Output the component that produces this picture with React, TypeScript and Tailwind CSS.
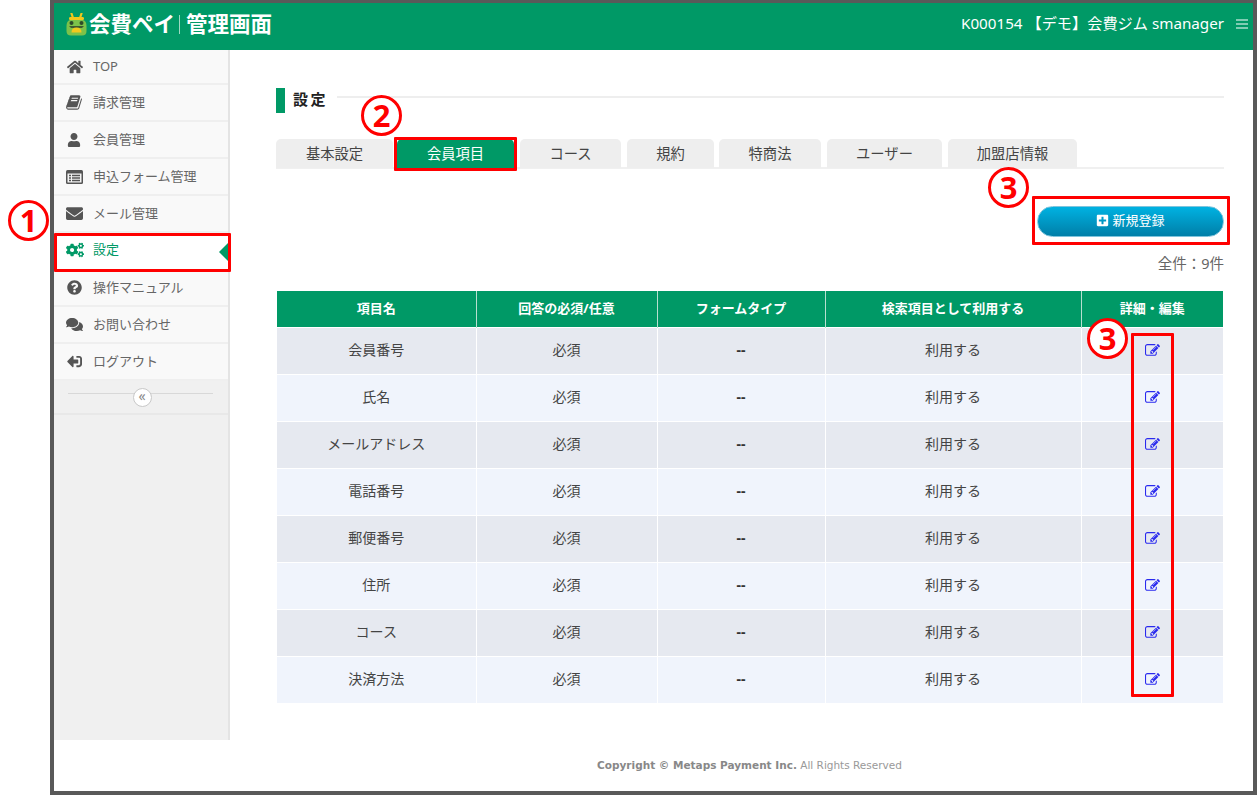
import React from "react";
import { FaHome, FaUser, FaEnvelope, FaCogs, FaQuestionCircle, FaComments, FaSignOutAlt, FaPlusSquare } from "react-icons/fa";

const font = { fontFamily: '"Noto Sans", "Noto Sans CJK JP", sans-serif' };

function BookIcon() {
  return (
    <svg width="16" height="17" viewBox="0 0 1664 1792" fill="currentColor">
      <path d="M1639 478q40 57 18 129l-275 906q-19 64-76.500 107.500t-122.500 43.500h-923q-77 0-148.500-53.500t-99.500-131.500q-24-67-2-127 0-4 3-27t4-37q1-8-3-21.500t-3-19.500q2-11 8-21t16.500-23.500 16.500-23.500q23-38 45-91.500t30-91.500q3-10 .5-30t-.5-28q3-11 17-28t17-23q21-36 42-92t25-90q1-9-2.500-32t.5-28q4-13 22-30.500t22-22.500q19-26 42.500-84.500t27.500-96.500q1-8-3-25.500t-2-26.500q2-8 9-18t18-23 17-21q8-12 16.500-30.500t15-35 16-36 19.500-32 26.500-23.500 36-11.500 47.500 5.500l-1 3q38-9 51-9h761q74 0 114 56t18 130l-274 906q-36 119-71.500 153.500t-128.500 34.500h-869q-27 0-38 15-11 16-1 43 24 70 144 70h923q29 0 56-15.500t35-41.500l300-987q7-22 5-57 38 15 59 43zm-1064 2q-4 13 2 22.500t20 9.500h608q13 0 25.500-9.500t16.500-22.500l21-64q4-13-2-22.500t-20-9.500h-608q-13 0-25.500 9.500t-16.500 22.500zm-83 256q-4 13 2 22.500t20 9.500h608q13 0 25.500-9.500t16.500-22.500l21-64q4-13-2-22.500t-20-9.500h-608q-13 0-25.500 9.500t-16.500 22.500z" />
    </svg>
  );
}

function ListIcon() {
  return (
    <svg width="17" height="14" viewBox="0 0 17 14">
      <rect x="0" y="0" width="17" height="14" rx="1.5" fill="#555" />
      <rect x="1.5" y="3.5" width="14" height="9" fill="#f4f4f4" />
      <path d="M3 5.5 H5 M3 8 H5 M3 10.500 H5 M6 5.500 H14 M6 8 H14 M6 10.500 H14" stroke="#555" strokeWidth="1.300" />
    </svg>
  );
}

function EditIcon() {
  return (
    <svg width="15" height="15" viewBox="0 0 1792 1792" fill="#2a2aee" className="mx-auto">
      <path d="M888 1184l116-116-152-152-116 116v56h96v96h56zm440-720q-16-16-33 1l-350 350q-17 17-1 33t33-1l350-350q17-17 1-33zm80 594v190q0 119-84.500 203.500t-203.500 84.500h-832q-119 0-203.500-84.500t-84.500-203.500v-832q0-119 84.500-203.500t203.500-84.500h832q63 0 117 25 15 7 18 23 3 17-9 29l-49 49q-14 14-32 8-23-6-45-6h-832q-66 0-113 47t-47 113v832q0 66 47 113t113 47h832q66 0 113-47t47-113v-126q0-13 9-22l64-64q15-15 35-7t20 29zm-96-738l288 288-672 672h-288v-288zm444 132l-92 92-288-288 92-92q28-28 68-28t68 28l152 152q28 28 28 68t-28 68z" />
    </svg>
  );
}

const nav = [
  { icon: <BookIcon />, label: "請求管理" },
  { icon: <FaUser className="text-[14px]" />, label: "会員管理" },
  { icon: <ListIcon />, label: "申込フォーム管理" },
  { icon: <FaEnvelope className="text-[17px]" />, label: "メール管理" },
];
const nav2 = [
  { icon: <FaQuestionCircle className="text-[15px]" />, label: "操作マニュアル" },
  { icon: <FaComments className="text-[17px]" />, label: "お問い合わせ" },
  { icon: <FaSignOutAlt className="text-[15px] -scale-x-100" />, label: "ログアウト" },
];
const tabs = [
  { label: "基本設定", w: "w-[121px]", pr: "pr-[4px]" },
  { label: "会員項目", w: "w-[123px]", pr: "pr-[6px]", active: true },
  { label: "コース", w: "w-[107px]", pr: "pr-[6px]" },
  { label: "規約", w: "w-[92px]", pr: "pr-[5px]" },
  { label: "特商法", w: "w-[108px]", pr: "pr-[6px]" },
  { label: "ユーザー", w: "w-[121px]", pr: "pr-[6px]" },
  { label: "加盟店情報", w: "w-[129px]", pr: "pr-0" },
];
const rows = ["会員番号", "氏名", "メールアドレス", "電話番号", "郵便番号", "住所", "コース", "決済方法"];

function Logo() {
  return (
    <svg width="21" height="23" viewBox="0 0 21 23" className="shrink-0">
      <path d="M5.500 0.500 L7 5 M15.500 0.500 L14 5" stroke="#efc81c" strokeWidth="2.200" strokeLinecap="round" />
      <rect x="3" y="4" width="15" height="3.200" rx="1.400" fill="#efc81c" />
      <path d="M4 7 H17 Q20.500 8 20.500 13 V18 Q20.500 22.500 16 22.500 H5 Q0.500 22.500 0.500 18 V13 Q0.500 8 4 7 Z" fill="#7cc24a" />
      <circle cx="5.500" cy="10" r="2" fill="#2c4a2a" />
      <circle cx="15.500" cy="10" r="2" fill="#2c4a2a" />
      <path d="M3 13 H18 L16 15 H5 Z" fill="#3e5a30" />
      <path d="M5.500 19.500 Q5.500 14.500 10.500 14.500 Q15.500 14.500 15.500 19.500 Z" fill="#f2c81e" />
    </svg>
  );
}

function Num({ n, className }: { n: string; className: string }) {
  return (
    <div className={"absolute flex h-[41px] w-[41px] items-center justify-center rounded-full border-[3px] border-[#ff0000] bg-white text-[31px] font-bold leading-none text-[#ff0000] " + className}>
      {n}
    </div>
  );
}

function NavItem({ icon, label }: { icon: React.ReactNode; label: string }) {
  return (
    <div className="flex h-[37px] items-center border-b-2 border-[#efefef] bg-[#f9f9f9] text-[13px] text-[#666]">
      <span className="flex w-[39px] shrink-0 justify-center pl-[1px] text-[#555]">{icon}</span>
      <span>{label}</span>
    </div>
  );
}

export default function App() {
  return (
    <div className="relative h-[796px] w-[1257px] overflow-hidden bg-white pl-[50px]" style={font}>
      <div className="flex h-[795px] w-[1207px] flex-col border-[4px] border-t-[3px] border-[#595959] bg-white">
        <header className="flex h-[47px] shrink-0 items-center justify-between bg-[#009966] pb-[5px] text-white">
          <div className="flex items-center pl-[12px]">
            <Logo />
            <span className="ml-[2px] text-[21.500px] font-bold leading-none">会費ペイ</span>
            <span className="mx-[4px] h-[19px] w-[1px] bg-[#9fd8c2]" />
            <span className="ml-[2px] text-[21.500px] font-bold leading-none">管理画面</span>
          </div>
          <div className="flex items-center pr-[5px] text-[15.200px] leading-none">
            <span>K000154 【デモ】会費ジム smanager</span>
            <svg width="12" height="10" viewBox="0 0 12 10" className="ml-[12px]">
              <path d="M0 1 H12 M0 5 H12 M0 9 H12" stroke="#fff" strokeWidth="1.200" />
            </svg>
          </div>
        </header>

        <div className="flex h-[690px] shrink-0">
          <aside className="w-[176px] shrink-0 border-r-2 border-[#e4e4e4] bg-[#f0f0f0]">
            <div className="flex h-[35px] items-center border-b-2 border-[#efefef] bg-[#f9f9f9] text-[13px] text-[#666]">
              <span className="flex w-[39px] shrink-0 justify-center pl-[2px] text-[#555]"><FaHome className="text-[16px]" /></span>
              <span>TOP</span>
            </div>
            {nav.map((n) => <NavItem key={n.label} {...n} />)}
            <div className="relative flex h-[37px] items-center bg-white pb-[3px] text-[13px] text-[#009966]">
              <span className="flex w-[39px] shrink-0 justify-center pl-[2px]"><FaCogs className="text-[18px]" /></span>
              <span>設定</span>
              <span className="absolute right-0 top-[10px] h-0 w-0 border-y-[9px] border-r-[9px] border-y-transparent border-r-[#009966]" />
            </div>
            {nav2.map((n) => <NavItem key={n.label} {...n} />)}
            <div className="relative flex h-[34px] items-center justify-center border-b-2 border-[#e8e8e8] pl-[2px]">
              <div className="absolute left-[14px] right-[15px] top-[12px] h-[1px] bg-[#d8d8d8]" />
              <div className="relative flex h-[19px] w-[19px] items-center justify-center rounded-full border border-[#c8c8c8] bg-white pb-[2px] text-[14px] leading-none text-[#888]">«</div>
            </div>
          </aside>

          <main className="flex-1 pl-[46px] pr-[29px] pt-[38px]">
            <div className="flex h-[25px] items-center">
              <div className="h-[25px] w-[9px] bg-[#009966]" />
              <span className="mb-[2px] ml-[8px] text-[15px] font-bold leading-none tracking-[2.500px] text-[#222]">設定</span>
              <div className="mb-[7px] ml-[9px] h-[2px] flex-1 bg-[#eeeeee]" />
            </div>

            <div className="mt-[26px] flex h-[30px] border-b-2 border-[#f0f0f0]">
              {tabs.map((t) => (
                <div key={t.label} className={t.w + " " + t.pr + " shrink-0"}>
                  <div className={"flex h-[29px] items-center justify-center rounded-t-[5px] text-[14.300px] " + (t.active ? "bg-[#009966] text-white" : "bg-[#eeeeee] text-[#444]")}>
                    {t.label}
                  </div>
                </div>
              ))}
            </div>

            <div className="mt-[37px] flex justify-end">
              <button className="flex h-[31px] w-[187px] items-center justify-center rounded-full border border-[#7fc4dc] bg-gradient-to-b from-[#00b2e2] to-[#007fa8] pb-[2px] text-[13px] text-white">
                <FaPlusSquare className="mr-[3px] text-[13px]" />新規登録
              </button>
            </div>

            <div className="mt-[16px] text-right text-[14.500px] leading-[20px] text-[#666]">全件：9件</div>

            <table className="ml-[1px] mt-[18px] w-[946px] table-fixed border-collapse">
              <colgroup>
                <col className="w-[199px]" />
                <col className="w-[181px]" />
                <col className="w-[168px]" />
                <col className="w-[256px]" />
                <col className="w-[142px]" />
              </colgroup>
              <thead>
                <tr className="h-[36px] bg-[#009966] text-[13px] text-white">
                  {["項目名", "回答の必須/任意", "フォームタイプ", "検索項目として利用する", "詳細・編集"].map((h) => (
                    <th key={h} className="border-x border-[#b8dfd0] pb-[1px] font-bold first:border-l-0 last:border-r-0">{h}</th>
                  ))}
                </tr>
              </thead>
              <tbody>
                {rows.map((r, i) => (
                  <tr key={r} className={"h-[47px] border-t border-white text-center text-[14px] text-[#444] " + (i % 2 === 0 ? "bg-[#e6e9f0]" : "bg-[#f0f4fc]")}>
                    <td className="border-x border-white pb-[3px] first:border-l-0">{r}</td>
                    <td className="border-x border-white pb-[3px]">必須</td>
                    <td className="border-x border-white pb-[3px] font-bold text-[#333]">--</td>
                    <td className="border-x border-white pb-[3px]">利用する</td>
                    <td className="border-x border-white pb-[1px] last:border-r-0">
                      <EditIcon />
                    </td>
                  </tr>
                ))}
              </tbody>
            </table>
          </main>
        </div>

        <footer className="pl-[176px] pt-[18px] text-center text-[10.500px] text-[#999]" style={{ fontFamily: '"DejaVu Sans", sans-serif' }}>
          <div className="pl-[16px]"><span className="font-bold text-[#888]">Copyright © Metaps Payment Inc.</span> All Rights Reserved</div>
        </footer>
      </div>

      <div className="absolute left-[54px] top-[233px] h-[39px] w-[177px] rounded-[1px] border-[3px] border-[#ff0000]" />
      <div className="absolute left-[394px] top-[137px] h-[34px] w-[123px] rounded-[1px] border-[3px] border-[#ff0000]" />
      <div className="absolute left-[1032px] top-[196px] h-[49px] w-[198px] rounded-[1px] border-[3px] border-[#ff0000]" />
      <div className="absolute left-[1131px] top-[333px] h-[364px] w-[43px] rounded-[1px] border-[3px] border-[#ff0000]" />
      <Num n="1" className="left-[8px] top-[200px]" />
      <Num n="2" className="left-[361px] top-[95px]" />
      <Num n="3" className="left-[988px] top-[167px]" />
      <Num n="3" className="left-[1087px] top-[318px]" />
    </div>
  );
}
